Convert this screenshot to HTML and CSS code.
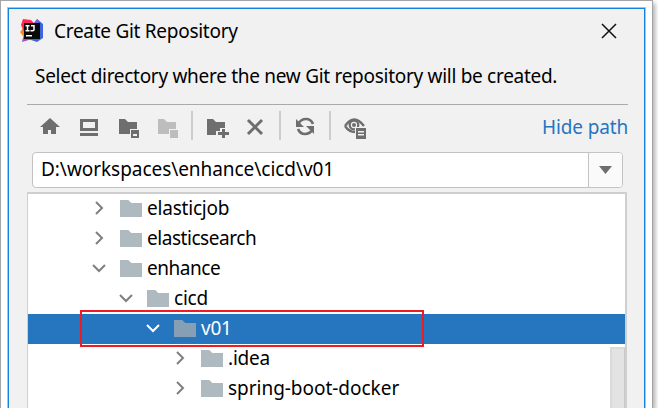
FILE: index.html
```html
<!DOCTYPE html>
<html lang="en">
<head>
<meta charset="utf-8">
<title>Create Git Repository</title>
<link rel="stylesheet" href="styles.css">
</head>
<body>
<svg class="defs" width="0" height="0">
  <symbol id="folder" viewBox="0 0 22 17"><path d="M0 0h8.3l3 3H22v14H0z"/></symbol>
  <symbol id="right" viewBox="0 0 14 14"><path d="M4 1l6 6-6 6"/></symbol>
  <symbol id="down" viewBox="0 0 14 14"><path d="M1 4l6 6 6-6"/></symbol>
</svg>
<div class="frame">
  <main class="dialog">
    <header class="titlebar">
      <svg class="logo" width="24" height="24" viewBox="0 0 24 24">
        <path fill="#ff8a1c" d="M4 8L0 13l3 4 6-7z"/>
        <path fill="#ff2857" d="M3 0l8 1 4 4-3 8H4L1 6z"/>
        <path fill="#b043c8" d="M4 15l-2 8 10-3V10z"/>
        <path fill="#3c66e0" d="M17 0l6 5v14l-6 4-9-3 8-10z"/>
        <path fill="#7d5bdc" d="M17 0l-4 5 4 4 2-7z"/>
        <rect x="4" y="4" width="16" height="16" fill="#090909"/>
        <path fill="none" stroke="#fff" stroke-width="1.5" d="M5.500 6.700h4M7.500 6.700v5M5.500 11.800h4M11 6.700h3v3.800q0 1.300-1.300 1.300H10.500M6 16.700h6"/>
      </svg>
      <h1 class="title">Create Git Repository</h1>
      <svg class="close" width="16" height="16" viewBox="0 0 16 16"><path d="M1 1l14 14M15 1L1 15"/></svg>
    </header>
    <p class="message">Select directory where the new Git repository will be created.</p>
    <div class="toolbar">
      <svg class="tools" width="330" height="30" viewBox="0 0 330 30">
        <path d="M13 7L3 16h3v7h5v-4h3v4h5v-7h4z"/>
        <path fill-rule="evenodd" d="M43 8h18v12H43zM46 11v6h12v-6zM43 22h18v3H43z"/>
        <path d="M82 8h6l3 3h9v7h-7v5H82z"/>
        <path fill-rule="evenodd" d="M94 19h8v8h-8zM96 23v2h4v-2z"/>
        <g class="disabled"><path d="M121 8h6l3 3h9v7h-7v5h-11z"/><path d="M133 19h8v8h-8z"/></g>
        <path d="M170 8h6l3 3h9v6h-5v3h-4v4h-9z"/>
        <path d="M185 18h3v3h4v3h-4v3h-3v-3h-4v-3h4z"/>
        <path class="line" d="M211 9l14 14M225 9l-14 14"/>
        <path class="line ring" d="M261 13q3-5 8-5 5 0 7 5M276 18q-3 5-8 5-5 0-7-5"/>
        <path d="M259 8v8h8zM277 15v8l-8-8z"/>
        <path class="line eye" d="M308 15q9-13 19 0M308 15q4 6 10 6"/>
        <circle class="line eye" cx="317" cy="14" r="4.300"/><circle cx="317" cy="14" r="2"/>
        <path class="knock" d="M318 16h12v13h-12z"/>
        <path fill-rule="evenodd" d="M319 17h10v11h-10zM321 20v1.500h6v-1.500zM321 23v1.500h6v-1.500z"/>
        <path class="sep" d="M154 0h2v29h-2zM242 0h2v29h-2zM292 0h2v29h-2z"/>
      </svg>
      <a class="hide">Hide path</a>
    </div>
    <div class="combo">
      <span class="path">D:\workspaces\enhance\cicd\v01</span>
      <span class="arrow"><svg width="13" height="8" viewBox="0 0 13 8"><path d="M0 0h13L6.500 8z"/></svg></span>
    </div>
    <div class="tree">
      <div class="row l1"><svg class="chev"><use href="#right"/></svg><svg class="folder"><use href="#folder"/></svg><span class="label">elasticjob</span></div>
      <div class="row l1"><svg class="chev"><use href="#right"/></svg><svg class="folder"><use href="#folder"/></svg><span class="label tight">elasticsearch</span></div>
      <div class="row l1"><svg class="chev"><use href="#down"/></svg><svg class="folder"><use href="#folder"/></svg><span class="label tight">enhance</span></div>
      <div class="row l2"><svg class="chev"><use href="#down"/></svg><svg class="folder"><use href="#folder"/></svg><span class="label">cicd</span></div>
      <div class="row l3 selected"><svg class="chev"><use href="#down"/></svg><svg class="folder"><use href="#folder"/></svg><span class="label">v01</span></div>
      <div class="row l4"><svg class="chev"><use href="#right"/></svg><svg class="folder"><use href="#folder"/></svg><span class="label">.idea</span></div>
      <div class="row l4"><svg class="chev"><use href="#right"/></svg><svg class="folder"><use href="#folder"/></svg><span class="label wide">spring-boot-docker</span></div>
      <div class="highlight"></div>
      <div class="scrollbar"></div>
    </div>
  </main>
</div>
</body>
</html>
```
FILE: styles.css
```css
* { box-sizing: border-box; }
body { margin: 0; width: 658px; height: 408px; overflow: hidden; background: #fff; color: #000; font: 19px/30px "Noto Sans", "Open Sans", sans-serif; }
.defs { position: absolute; }
.frame { width: 653px; height: 408px; border: 1px solid #a5a5a5; border-bottom: 0; padding: 6px 6px 0; background: #fff; box-shadow: 2px 3px 5px #aaa; }
.dialog { width: 639px; height: 401px; overflow: hidden; border: 1px solid #c4bdb5; border-bottom: 0; background: #f1f1f1; box-shadow: inset 1px 1px #1683dc, inset -1px 0 #1683dc; padding: 1px 1px 0; }
.titlebar { height: 44px; display: flex; align-items: center; padding: 0 27px 0 11px; }
.logo { flex: none; }
.title { margin: 0 auto 0 10px; font-size: 19px; font-weight: 400; letter-spacing: -.28px; white-space: nowrap; }
.close { fill: none; stroke: #111; stroke-width: 1.5; }
.message { margin: 8px 0 0 26px; height: 43px; white-space: nowrap; letter-spacing: -.29px; }
.toolbar { margin: 0 16px 0 18px; height: 48px; border-top: 1px solid #aaa; display: flex; justify-content: space-between; padding-top: 6px; }
.tools { margin-left: 10px; fill: #6e6e6e; overflow: visible; }
.tools .line { fill: none; stroke: #6e6e6e; stroke-width: 3; }
.tools .eye { stroke-width: 2.3; }
.tools .ring { stroke-width: 2.7; }
.tools .disabled { fill: #bdbdbd; }
.tools .sep { fill: #cdcdcd; }
.tools .knock { fill: #f1f1f1; }
.hide { padding-top: 1px; color: #2675bf; letter-spacing: -.15px; }
.combo { margin-left: 23px; width: 591px; height: 36px; border: 1px solid #c3c3c3; border-radius: 4px; display: flex; justify-content: space-between; background: #fff; overflow: hidden; }
.path { padding: 1px 0 0 8px; letter-spacing: -.05px; }
.arrow { width: 34px; border-left: 1px solid #c3c3c3; background: #fafafa; display: flex; align-items: center; justify-content: center; fill: #6e6e6e; }
.tree { position: relative; margin: 4px 0 0 18px; width: 600px; height: 216px; border: solid #cfcfcf; border-width: 2px 2px 0 1px; background: #fff; overflow: hidden; }
.row { height: 30px; display: flex; align-items: center; white-space: nowrap; letter-spacing: -.2px; }
.label { padding-bottom: 2px; }
.tight { letter-spacing: -.45px; }
.wide { letter-spacing: -.03px; }
.chev { width: 14px; height: 14px; margin: -2px 14px 0 0; fill: none; stroke: #7f7f7f; stroke-width: 2; }
.folder { width: 22px; height: 17px; margin: 0 5px 1px 0; fill: #afb9c0; }
.l1 { padding-left: 64px; }
.l2 { padding-left: 91px; }
.l3 { padding-left: 118px; }
.l4 { padding-left: 145px; }
.selected { background: #2675bf; color: #fff; }
.selected .chev { stroke: #fff; }
.selected .folder { fill: #879fb4; }
.highlight { position: absolute; left: 52px; top: 116px; width: 344px; height: 37px; border: 2px solid #ed1c24; }
.scrollbar { position: absolute; right: 0; top: 153px; width: 15px; height: 80px; background: #e3e3e3; border: 2px solid #dadada; border-right: 1px solid #c8c8c8; }
```
